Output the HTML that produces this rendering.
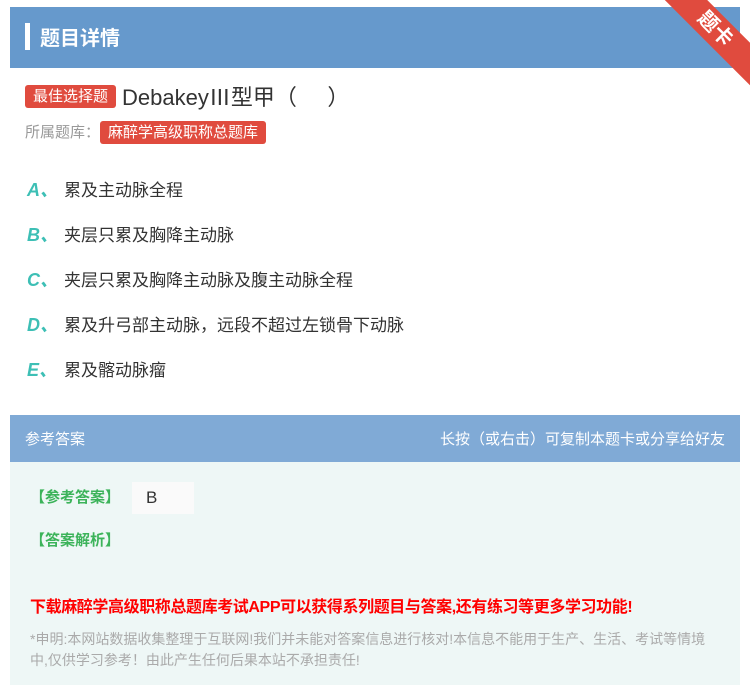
<!DOCTYPE html>
<html><head><meta charset="utf-8"><style>
body{margin:0;width:750px;height:685px;background:#fff;font-family:"Liberation Sans","Noto Sans CJK SC",sans-serif;position:relative;overflow:hidden}
.hdr{position:absolute;left:10px;top:7px;width:730px;height:61px;background:#6699cc}
.hdr .bar{position:absolute;left:15px;top:16px;width:5px;height:27px;background:#fff}
.hdr .t{position:absolute;left:30px;top:15px;color:#fff;font-size:20px;font-weight:bold}
.rib{position:absolute;right:-30px;top:14px;width:130px;height:30px;background:#e04b3e;transform:rotate(45deg);color:#fff;text-align:center;font-size:20px;font-weight:bold;line-height:30px}
.tag{display:inline-block;background:#e04b3e;color:#fff;border-radius:3px;font-size:15px;padding:0 8px;height:23px;line-height:23px}
.q{position:absolute;left:25px;top:80px;font-size:22px;color:#333}
.q .tag{vertical-align:4px;margin-right:6px}
.lib{position:absolute;left:25px;top:121px;font-size:15px;color:#999}
.opt{position:absolute;left:27px;font-size:17px;color:#333}
.opt b{color:#3dbfb5;font-style:italic;font-size:18px;display:inline-block;width:37px}
.ah{position:absolute;left:10px;top:415px;width:730px;height:47px;background:#80aad6;color:#fff;font-size:15px}
.ab{position:absolute;left:10px;top:462px;width:730px;height:223px;background:#eef7f6}
.g{color:#3cb35a;font-size:15px;font-weight:bold;position:absolute;left:20px}
</style></head><body>
<div class="hdr"><div class="bar"></div><div class="t">题目详情</div></div>
<div class="rib">题卡</div>
<div class="q"><span class="tag">最佳选择题</span>DebakeyⅢ型甲（&nbsp;&nbsp;&nbsp;&nbsp;&nbsp;）</div>
<div class="lib">所属题库：<span class="tag">麻醉学高级职称总题库</span></div>
<div class="opt" style="top:176px"><b>A、</b>累及主动脉全程</div>
<div class="opt" style="top:221px"><b>B、</b>夹层只累及胸降主动脉</div>
<div class="opt" style="top:266px"><b>C、</b>夹层只累及胸降主动脉及腹主动脉全程</div>
<div class="opt" style="top:311px"><b>D、</b>累及升弓部主动脉，远段不超过左锁骨下动脉</div>
<div class="opt" style="top:356px"><b>E、</b>累及髂动脉瘤</div>
<div class="ah"><span style="position:absolute;left:15px;top:13px">参考答案</span><span style="position:absolute;right:15px;top:13px">长按（或右击）可复制本题卡或分享给好友</span></div>
<div class="ab">
<div class="g" style="top:24px">【参考答案】</div>
<div style="position:absolute;left:122px;top:20px;width:62px;height:32px;background:#fafafa;font-size:17px;color:#333;padding-left:14px;box-sizing:border-box;line-height:32px">B</div>
<div class="g" style="top:67px">【答案解析】</div>
<div style="position:absolute;left:20px;top:131px;color:#f00;font-size:16px;font-weight:bold;letter-spacing:-0.4px">下载麻醉学高级职称总题库考试APP可以获得系列题目与答案,还有练习等更多学习功能!</div>
<div style="position:absolute;left:20px;top:167px;width:690px;color:#aaa;font-size:14px;line-height:21px">*申明:本网站数据收集整理于互联网!我们并未能对答案信息进行核对!本信息不能用于生产、生活、考试等情境中,仅供学习参考！由此产生任何后果本站不承担责任!</div>
</div>
</body></html>
